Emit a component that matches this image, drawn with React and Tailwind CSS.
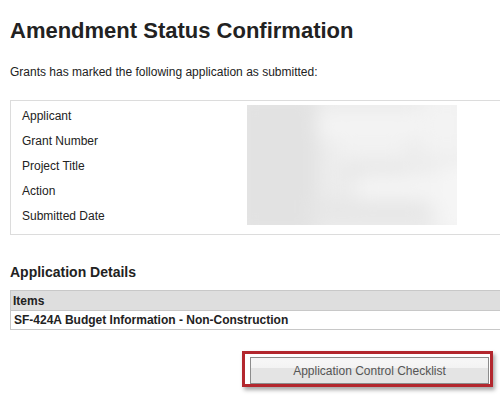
import React from "react";

function Blur() {
  return (
    <svg width="210" height="120" viewBox="0 0 210 120" className="block">
      <defs>
        <filter id="b" x="-20%" y="-20%" width="140%" height="140%">
          <feGaussianBlur stdDeviation="9" />
        </filter>
        <clipPath id="c">
          <rect x="0" y="0" width="210" height="120" />
        </clipPath>
      </defs>
      <g clipPath="url(#c)">
        <rect x="0" y="0" width="210" height="120" fill="#ececec" />
        <g filter="url(#b)">
          <rect x="-10" y="-10" width="80" height="140" fill="#e2e2e2" />
          <rect x="70" y="8" width="110" height="24" fill="#f4f4f4" />
          <rect x="90" y="34" width="70" height="20" fill="#f2f2f2" />
          <rect x="100" y="58" width="60" height="16" fill="#e6e6e6" />
          <rect x="110" y="70" width="90" height="30" fill="#f4f4f4" />
          <rect x="175" y="-10" width="50" height="60" fill="#f3f3f3" />
          <rect x="60" y="95" width="120" height="20" fill="#e6e6e6" />
          <rect x="190" y="60" width="40" height="70" fill="#f5f5f5" />
        </g>
      </g>
    </svg>
  );
}

export default function App() {
  const labels = ["Applicant", "Grant Number", "Project Title", "Action", "Submitted Date"];
  return (
    <div className="w-[500px] h-[400px] overflow-hidden bg-white pl-[10px] font-['Liberation_Sans',Arial,sans-serif] text-[#222]">
      <h1 className="pt-[18px] text-[22px] leading-[26px] font-bold text-[#222]">
        Amendment Status Confirmation
      </h1>
      <p className="mt-[21px] text-[12px] leading-[14px]">
        Grants has marked the following application as submitted:
      </p>
      <div className="mt-[21px] flex h-[135px] w-[520px] border border-[#dcdcdc]">
        <div className="w-[236px] pl-[11px] pt-[3px]">
          {labels.map((l) => (
            <div key={l} className="h-[25px] text-[12px] leading-[25px]">
              {l}
            </div>
          ))}
        </div>
        <div className="mt-[4px]">
          <Blur />
        </div>
      </div>
      <h2 className="mt-[29px] text-[14px] leading-[16px] font-bold">Application Details</h2>
      <div className="mt-[10px] w-[520px] border border-[#c8c8c8] text-[12px] font-bold">
        <div className="h-[20px] border-b border-[#c8c8c8] bg-[#dedede] pl-[2px] leading-[20px]">
          Items
        </div>
        <div className="h-[18px] pl-[3px] leading-[18px]">
          SF-424A Budget Information - Non-Construction
        </div>
      </div>
      <div className="ml-[232px] mt-[21px] h-[36px] w-[251px] border-[3px] border-[#b3272e] pl-[5px] pr-[1px] pt-[3px] shadow-[2px_3px_4px_rgba(0,0,0,0.35)]">
        <div className="flex h-[27px] w-[239px] items-center justify-center border border-[#8c8c8c] bg-[linear-gradient(to_bottom,#f7f7f7_0%,#f3f3f3_40%,#e4e4e4_42%,#e4e4e4_100%)] text-[12px] text-[#555]">
          Application Control Checklist
        </div>
      </div>
    </div>
  );
}
